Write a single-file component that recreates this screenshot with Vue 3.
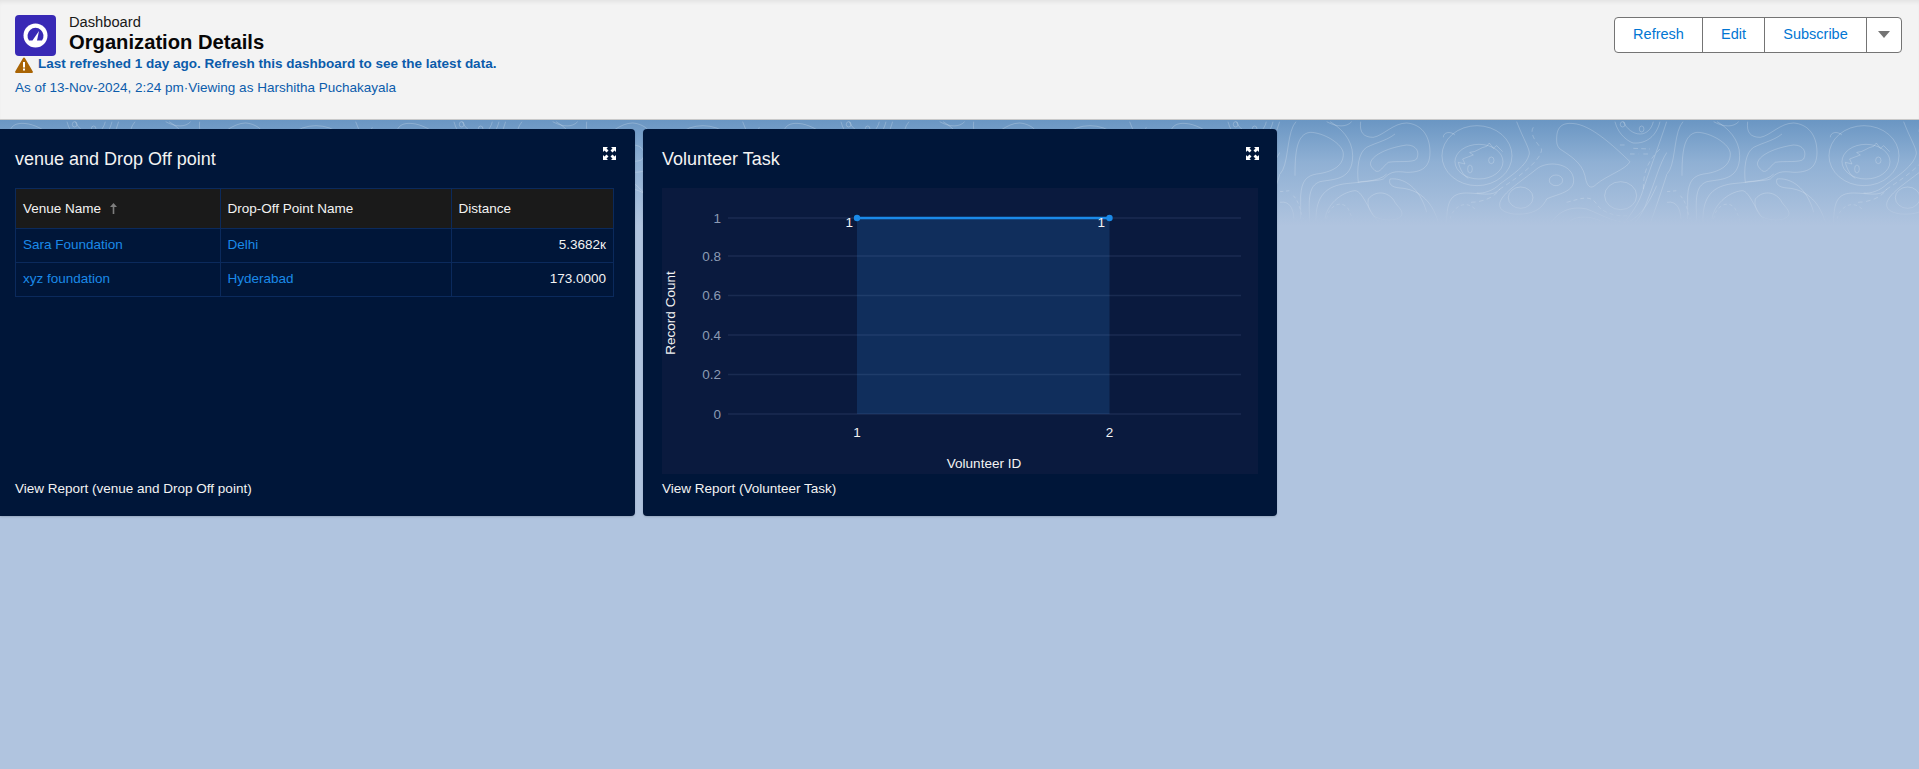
<script setup>
const rows = [
  { venue: 'Sara Foundation', point: 'Delhi', distance: '5.3682к' },
  { venue: 'xyz foundation', point: 'Hyderabad', distance: '173.0000' }
]

const yTicks = [
  { label: '1', y: 30 },
  { label: '0.8', y: 68 },
  { label: '0.6', y: 107.5 },
  { label: '0.4', y: 147 },
  { label: '0.2', y: 186.5 },
  { label: '0', y: 226 }
]

const actions = ['Refresh', 'Edit', 'Subscribe']
</script>

<template>
  <div class="page">
    <header class="top">
      <div class="top-left">
        <div class="title-row">
          <div class="logo">
            <svg width="41" height="41" viewBox="0 0 41 41">
              <circle cx="20.5" cy="20.5" r="12" fill="#fff" />
              <path d="M14 25.500a8 8 0 1 1 13 0z" fill="#3829b5" />
              <path d="M17.500 25.500l6.500-9.500-2.200 10.600a2.400 2.400 0 0 1-4.300-1.100z" fill="#fff" />
            </svg>
          </div>
          <div class="titles">
            <div class="kicker">Dashboard</div>
            <h1>Organization Details</h1>
          </div>
        </div>
        <div class="stale">
          <svg width="18" height="16" viewBox="0 0 18 16">
            <path d="M9 .5a1 1 0 0 1 .9.5l7.900 13.400a1 1 0 0 1-.9 1.500H1.100a1 1 0 0 1-.9-1.500L8.100 1a1 1 0 0 1 .9-.5z" fill="#a96404" />
            <rect x="8" y="5" width="2" height="5.500" fill="#fff" />
            <rect x="8" y="11.500" width="2" height="2" fill="#fff" />
          </svg>
          <span>Last refreshed 1 day ago. Refresh this dashboard to see the latest data.</span>
        </div>
        <div class="asof">As of 13-Nov-2024, 2:24 pm·Viewing as Harshitha Puchakayala</div>
      </div>
      <div class="btn-group">
        <button v-for="a in actions" :key="a" class="btn" :class="'btn-' + a.toLowerCase()">{{ a }}</button>
        <button class="btn btn-more"><span class="caret"></span></button>
      </div>
    </header>

    <main class="canvas">
      <!-- contour texture behind the cards -->
      <svg class="topo" width="1919" height="105">
        <defs>
          <pattern id="topo-tile" patternUnits="userSpaceOnUse" x="119" y="-1" width="387" height="105">
            <g transform="scale(.3333)" fill="none" stroke="#fff" stroke-opacity=".22" stroke-width="3">
              <path d="M45 170C45 100 50 45 90 40C130 40 190 75 190 105C190 145 150 160 110 165C80 170 65 185 62 230L62 300" />
              <path d="M0 165C25 140 20 60 40 20L48 8M90 315C85 240 85 200 120 188C160 180 218 185 218 110C218 60 180 25 150 8" />
              <path d="M242 8C238 40 250 55 280 55C310 50 340 12 380 12C420 15 450 45 450 100C450 150 420 160 380 160C340 155 330 160 310 180C290 188 240 185 235 190C230 150 235 100 260 85C290 70 320 65 345 45" />
              <path d="M272 130C280 105 330 85 380 78C410 78 420 100 410 120C400 132 350 125 325 130C310 140 300 165 285 155C275 145 270 140 272 130Z" />
              <path d="M140 8C170 25 200 25 215 8" />
              <path d="M330 180C325 195 335 205 360 207C410 210 455 240 475 310M330 180C370 175 420 205 440 280" />
              <path d="M265 240C290 210 330 220 345 250C355 265 370 275 365 290C350 310 300 305 280 290C265 270 262 255 265 240Z" />
              <path d="M108 315C105 240 130 205 190 195C220 190 300 190 320 165M135 300C140 260 180 220 225 215C250 215 270 290 300 310" />
              <path d="M140 300C145 260 185 240 205 270L220 305M40 230C60 250 60 280 70 300M0 218L30 215M510 300C520 260 560 240 590 275" stroke-dasharray="10 8" />
              <path d="M0 250C30 245 40 270 42 300M500 315C500 250 510 222 560 222C600 222 640 235 660 210" />
              <path d="M490 55C490 40 510 35 525 48" />
              <ellipse cx="591" cy="110" rx="105" ry="90" />
              <ellipse cx="597" cy="128" rx="72" ry="52" />
              <path d="M570 100C590 100 600 85 620 82L628 72L640 88L650 80L668 98M568 100L580 108L548 120L555 135L535 130C540 150 550 170 565 178" />
              <ellipse cx="570" cy="150" rx="7" ry="12" />
              <ellipse cx="634" cy="124" rx="8" ry="10" />
              <path d="M710 8C730 60 750 90 748 105C740 140 700 165 660 195C640 215 610 225 590 222" />
              <path d="M760 25C750 40 760 60 785 90C785 120 730 165 660 210C640 240 600 250 570 250" stroke-dasharray="14 10" />
              <path d="M830 60C830 20 850 8 890 15C940 25 1000 80 1050 128C1040 150 980 170 950 195C930 215 920 200 915 170C905 130 870 110 840 90C830 80 830 70 830 60Z" />
              <ellipse cx="828" cy="184" rx="20" ry="16" />
              <ellipse cx="722" cy="236" rx="37" ry="32" />
              <path d="M660 250C670 220 720 190 770 150C800 125 870 130 880 175C890 220 830 225 800 240C790 260 770 290 700 285C670 280 655 270 660 250Z" />
              <ellipse cx="1022" cy="230" rx="48" ry="42" />
              <path d="M810 315C840 270 880 262 920 270C960 285 1000 310 1040 310C1070 300 1100 270 1130 200M860 315C880 290 930 285 980 315" />
              <path d="M860 250C900 240 930 225 950 255C960 275 1000 295 1050 290" stroke-dasharray="12 9" />
              <path d="M1005 8C1015 50 1050 70 1060 72C1100 75 1130 50 1140 8M1030 8C1040 30 1060 45 1080 45C1100 45 1115 30 1120 8" />
              <ellipse cx="1028" cy="16" rx="7" ry="8" />
              <ellipse cx="1085" cy="30" rx="7" ry="9" />
              <path d="M1020 78L1040 78M1060 88L1110 90M1050 105L1075 105M1090 105L1110 105M1090 210C1090 150 1110 120 1140 90" stroke-dasharray="14 10" />
              <path d="M1160 8C1140 70 1110 150 1090 210C1080 250 1050 290 1030 315M1161 100C1140 130 1125 190 1100 250C1090 280 1075 300 1060 315M1161 165C1150 200 1130 260 1110 315" />
            </g>
          </pattern>
          <linearGradient id="topo-fade" x1="0" y1="0" x2="0" y2="1">
            <stop offset="0" stop-color="#fff" />
            <stop offset=".75" stop-color="#fff" stop-opacity=".9" />
            <stop offset="1" stop-color="#fff" stop-opacity="0" />
          </linearGradient>
          <mask id="topo-mask">
            <rect width="1919" height="105" fill="url(#topo-fade)" />
          </mask>
        </defs>
        <rect width="1919" height="105" fill="url(#topo-tile)" mask="url(#topo-mask)" />
      </svg>

      <div class="cards">
        <section class="card">
          <div class="card-head">
            <h2>venue and Drop Off point</h2>
            <svg class="expand" width="13" height="13" viewBox="0 0 13 13" fill="#fff">
              <path d="M0 0h5L3.500 1.500 5.500 3.500 3.500 5.500 1.500 3.500 0 5zM13 0v5L11.500 3.500 9.500 5.500 7.500 3.500 9.500 1.500 8 0zM13 13H8L9.500 11.500 7.500 9.500 9.500 7.500 11.500 9.500 13 8zM0 13V8L1.500 9.500 3.500 7.500 5.500 9.500 3.500 11.500 5 13z" />
            </svg>
          </div>
          <table class="report">
            <thead>
              <tr>
                <th class="c1">
                  Venue Name
                  <svg class="sort" width="7" height="11" viewBox="0 0 7 11">
                    <path d="M3.500 0L7 4H4.300v7H2.700V4H0z" fill="#7d7d7d" />
                  </svg>
                </th>
                <th class="c2">Drop-Off Point Name</th>
                <th>Distance</th>
              </tr>
            </thead>
            <tbody>
              <tr v-for="r in rows" :key="r.venue">
                <td class="link">{{ r.venue }}</td>
                <td class="link">{{ r.point }}</td>
                <td class="num">{{ r.distance }}</td>
              </tr>
            </tbody>
          </table>
          <a class="view-report">View Report (venue and Drop Off point)</a>
        </section>

        <section class="card">
          <div class="card-head">
            <h2>Volunteer Task</h2>
            <svg class="expand" width="13" height="13" viewBox="0 0 13 13" fill="#fff">
              <path d="M0 0h5L3.500 1.500 5.500 3.500 3.500 5.500 1.500 3.500 0 5zM13 0v5L11.500 3.500 9.500 5.500 7.500 3.500 9.500 1.500 8 0zM13 13H8L9.500 11.500 7.500 9.500 9.500 7.500 11.500 9.500 13 8zM0 13V8L1.500 9.500 3.500 7.500 5.500 9.500 3.500 11.500 5 13z" />
            </svg>
          </div>
          <svg class="chart" width="596" height="286" viewBox="0 0 596 286">
            <rect x="195" y="30" width="252.500" height="196" fill="#102e5c" />
            <g v-for="t in yTicks" :key="t.label">
              <line x1="66" x2="579" :y1="t.y" :y2="t.y" stroke="#8ea6d0" stroke-opacity=".13" stroke-width="1.500" />
              <text x="59" :y="t.y + 4.500" text-anchor="end" class="tick">{{ t.label }}</text>
            </g>
            <line x1="195" x2="447" y1="30" y2="30" stroke="#1b8ae8" stroke-width="2.500" />
            <circle cx="195" cy="30" r="3.200" fill="#1b8ae8" />
            <circle cx="447.500" cy="30" r="3.200" fill="#1b8ae8" />
            <text x="191" y="39" text-anchor="end" class="val">1</text>
            <text x="443" y="39" text-anchor="end" class="val">1</text>
            <text x="195" y="249" text-anchor="middle" class="val">1</text>
            <text x="447.500" y="249" text-anchor="middle" class="val">2</text>
            <text x="322" y="280" text-anchor="middle" class="val">Volunteer ID</text>
            <text transform="translate(13 125) rotate(-90)" text-anchor="middle" class="val">Record Count</text>
          </svg>
          <a class="view-report">View Report (Volunteer Task)</a>
        </section>
      </div>
    </main>
  </div>
</template>

<style>
html,
body {
  margin: 0;
  overflow: hidden;
}
</style>

<style scoped>
.page {
  display: flex;
  flex-direction: column;
  min-height: 769px;
  font-family: 'Liberation Sans', Arial, sans-serif;
  background: #b0c4df;
}

.top {
  display: flex;
  justify-content: space-between;
  align-items: flex-start;
  box-sizing: border-box;
  height: 120px;
  padding: 15px 17px 0 15px;
  background: #f3f3f3;
  border-bottom: 1px solid #c9c9c9;
  box-shadow: inset 0 4px 4px -2px rgba(0, 0, 0, 0.07);
  position: relative;
  z-index: 1;
}

.title-row {
  display: flex;
  align-items: flex-start;
}

.logo {
  width: 41px;
  height: 41px;
  border-radius: 4px;
  background: #3829b5;
}

.logo svg {
  display: block;
}

.titles {
  margin-left: 13px;
}

.kicker {
  font-size: 14.7px;
  line-height: 16px;
  margin-top: -1px;
  color: #181818;
}

h1 {
  margin: 0;
  font-size: 20.2px;
  line-height: 24px;
  font-weight: 700;
  color: #080707;
}

.stale {
  display: flex;
  align-items: center;
  gap: 5px;
  height: 16px;
  margin-top: 0;
  font-size: 13.5px;
  font-weight: 700;
  color: #0b5cab;
}

.stale svg {
  flex: none;
  margin-top: 2px;
}

.stale span {
  margin-top: -2px;
}

.asof {
  margin-top: 8px;
  font-size: 13.5px;
  line-height: 16px;
  color: #0b5cab;
}

.btn-group {
  display: flex;
  height: 36px;
  margin-top: 2px;
  background: #fff;
  border: 1px solid #747474;
  border-radius: 4px;
  box-sizing: border-box;
}

.btn {
  padding: 0 0 2px;
  border: 0;
  border-left: 1px solid #747474;
  background: none;
  font: inherit;
  font-size: 14.5px;
  color: #0176d3;
}

.btn-refresh {
  width: 87px;
  border-left: 0;
}

.btn-edit {
  width: 62px;
}

.btn-subscribe {
  width: 102px;
}

.btn-more {
  width: 35px;
  display: flex;
  align-items: center;
  justify-content: center;
}

.caret {
  width: 0;
  height: 0;
  border-left: 6px solid transparent;
  border-right: 6px solid transparent;
  border-top: 7px solid #747474;
  margin-top: 1px;
}

.canvas {
  flex: 1;
  position: relative;
  background: linear-gradient(#6a96c3, #8fb0d4 42px, #b0c4df 106px);
}

.topo {
  position: absolute;
  top: 0;
  left: 0;
}

.cards {
  position: relative;
  display: grid;
  grid-template-columns: 634.5px 634px;
  gap: 8.5px;
  padding-top: 9px;
}

.card {
  display: flex;
  flex-direction: column;
  box-sizing: border-box;
  height: 387px;
  padding: 0 19px 19px;
  background: #001639;
  border-radius: 4px;
  box-shadow: 0 1px 2px rgba(0, 0, 0, 0.15);
}

.card:first-child {
  padding: 0 20px 19px 15px;
  border-radius: 0 4px 4px 0;
}

.card-head {
  display: flex;
  justify-content: space-between;
  height: 59px;
  position: relative;
}

h2 {
  margin: 20px 0 0;
  font-size: 18px;
  line-height: 21px;
  font-weight: 400;
  color: #f3f3f3;
}

.expand {
  position: absolute;
  top: 18px;
  right: -1px;
}

.report {
  width: 599px;
  table-layout: fixed;
  border-collapse: collapse;
  font-size: 13.5px;
  color: #f3f3f3;
}

.report th,
.report td {
  border: 1px solid #0b2a5c;
  padding: 0 7px;
  text-align: left;
  font-weight: 400;
}

.report th {
  height: 39px;
  background: #1a1a1a;
  color: #f3f3f3;
}

.report td {
  height: 34px;
  padding-bottom: 2px;
  box-sizing: border-box;
}

.report .c1 {
  width: 189.5px;
}

.report .c2 {
  width: 216px;
}

.sort {
  margin-left: 5px;
  vertical-align: -1px;
}

.report .link {
  color: #1b8ae8;
}

.report .num {
  text-align: right;
}

.view-report {
  margin-top: auto;
  font-size: 13.5px;
  line-height: 16px;
  color: #f3f3f3;
}

.chart {
  display: block;
  background: #0a1a3e;
}

.tick {
  font-size: 13.5px;
  fill: #8c9ab3;
}

.val {
  font-size: 13.5px;
  fill: #f3f3f3;
}
</style>
